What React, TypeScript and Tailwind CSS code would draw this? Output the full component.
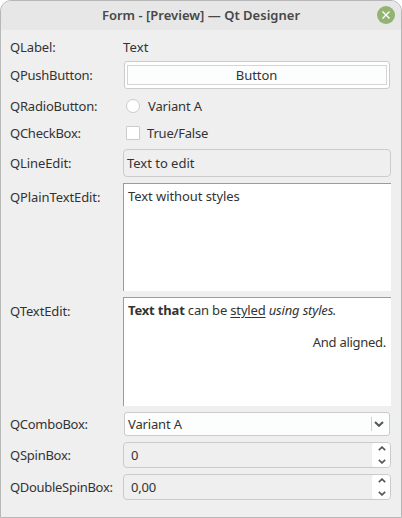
import type { ReactNode } from "react";

function Row({ label, className, labelClass = "", children }: { label: string; className: string; labelClass?: string; children: ReactNode }) {
  return (
    <div className={`flex shrink-0 ${className}`}>
      <div className={`flex w-[113px] shrink-0 items-center whitespace-nowrap ${labelClass}`}>
        <span>{label}</span>
      </div>
      <div className="flex w-[268px] shrink-0 items-center">{children}</div>
    </div>
  );
}

function Chevron({ up = false, className }: { up?: boolean; className: string }) {
  return (
    <svg viewBox="0 0 10 6" fill="none" stroke="#555555" className={className} strokeWidth="2">
      <path d={up ? "M1 5 5 1.2 9 5" : "M1 1 5 4.8 9 1"} />
    </svg>
  );
}

function Spin({ value }: { value: string }) {
  return (
    <div className="flex h-[26px] w-full overflow-hidden rounded-[4px] border border-[#cbcbcb]">
      <div className="flex flex-1 items-center pl-[7px]">
        <span className="tracking-[-0.2px]">{value}</span>
      </div>
      <div className="flex w-[18px] flex-col items-center justify-between rounded-[3px] bg-white py-[3px] pl-px">
        <Chevron up className="h-[5px] w-2" />
        <Chevron className="h-[5px] w-2" />
      </div>
    </div>
  );
}

export default function App() {
  return (
    <div className="h-[518px] w-[402px] overflow-hidden bg-white font-['Noto_Sans',sans-serif] text-[13px] leading-[18px] text-[#333333]">
      <div className="flex h-full w-full flex-col overflow-hidden rounded-t-[11px] border border-[#b7b7b7] bg-[#efefef]">
        <header className="flex h-[29px] shrink-0 items-center bg-[#e7e7e7]">
          <div className="w-[24px]" />
          <h1 className="-mt-px flex-1 text-center text-[13px] font-semibold tracking-[0.01px] text-[#484848]">Form - [Preview] — Qt Designer</h1>
          <div className="mr-[6px] -mt-px flex h-[18px] w-[18px] items-center justify-center rounded-full bg-[#92b372]">
            <svg viewBox="0 0 8 8" className="h-2 w-2" stroke="white" strokeWidth="1.4">
              <path d="M.5.5 7.5 7.5M7.5.5.5 7.5" />
            </svg>
          </div>
        </header>
        <main className="flex flex-1 flex-col pl-[9px]">
          <Row label="QLabel:" className="mt-2 h-[18px]" labelClass="tracking-[-0.1px]">
            <span className="tracking-[0.15px]">Text</span>
          </Row>
          <Row label="QPushButton:" className="mt-[5px] h-7" labelClass="tracking-[-0.25px]">
            <button className="ml-px flex h-7 w-[266px] rounded-[3px] border border-[#cbcbcb] bg-white p-[2px] pt-[3px] pb-[3px]">
              <span className="flex flex-1 items-center justify-center self-stretch border border-[#d5d5d5] bg-[#fcfefd] pr-px tracking-[-0.05px]">Button</span>
            </button>
          </Row>
          <Row label="QRadioButton:" className="mt-2 h-[18px]" labelClass="tracking-[-0.2px]">
            <span className="ml-[3px] h-[14px] w-[14px] rounded-full border border-[#cbcbcb] bg-white" />
            <span className="ml-2 tracking-[-0.15px]">Variant A</span>
          </Row>
          <Row label="QCheckBox:" className="mt-[9px] h-[18px]" labelClass="tracking-[-0.25px]">
            <span className="ml-[3px] h-[14px] w-[14px] rounded-[1px] border border-[#cbcbcb] bg-white" />
            <span className="ml-[7px] tracking-[-0.2px]">True/False</span>
          </Row>
          <Row label="QLineEdit:" className="mt-[7px] h-7" labelClass="tracking-[-0.1px]">
            <div className="flex h-7 w-full items-center rounded-[4px] border border-[#cbcbcb] pl-[3px]">
              <span className="tracking-[-0.02px]">Text to edit</span>
            </div>
          </Row>
          <Row label="QPlainTextEdit:" className="mt-[6px] h-[108px]" labelClass="h-[28px] tracking-[-0.1px]">
            <div className="h-full w-full border-t border-l border-[#9b9b9b] bg-white pt-[3px] pl-[4px]">
              <span className="tracking-[-0.07px]">Text without styles</span>
            </div>
          </Row>
          <Row label="QTextEdit:" className="mt-[6px] h-[109px]" labelClass="h-[28px] tracking-[-0.1px]">
            <div className="h-full w-full border-t border-l border-[#9b9b9b] bg-white pt-[3px] pr-[5px] pl-[4px]">
              <p className="tracking-[-0.17px] whitespace-nowrap">
                <b>Text that</b> can be <u className="underline-offset-2">styled</u> <i>using styles.</i>
              </p>
              <p className="mt-[14px] text-right tracking-[-0.28px]">And aligned.</p>
            </div>
          </Row>
          <Row label="QComboBox:" className="mt-[6px] h-6" labelClass="tracking-[-0.3px]">
            <div className="ml-px flex h-6 w-[266px] items-center rounded-[3px] border border-[#cbcbcb] bg-[#fcfefd] pl-[3px]">
              <span className="flex-1 tracking-[-0.15px]">Variant A</span>
              <span className="h-[14px] w-px bg-[#d0d0d0]" />
              <Chevron className="mr-[5px] ml-[2px] h-[6px] w-[10px]" />
            </div>
          </Row>
          <Row label="QSpinBox:" className="mt-[6px] h-[26px]" labelClass="tracking-[-0.25px]">
            <Spin value="0" />
          </Row>
          <Row label="QDoubleSpinBox:" className="mt-[6px] h-[26px]" labelClass="tracking-[-0.3px]">
            <Spin value="0,00" />
          </Row>
        </main>
      </div>
    </div>
  );
}
